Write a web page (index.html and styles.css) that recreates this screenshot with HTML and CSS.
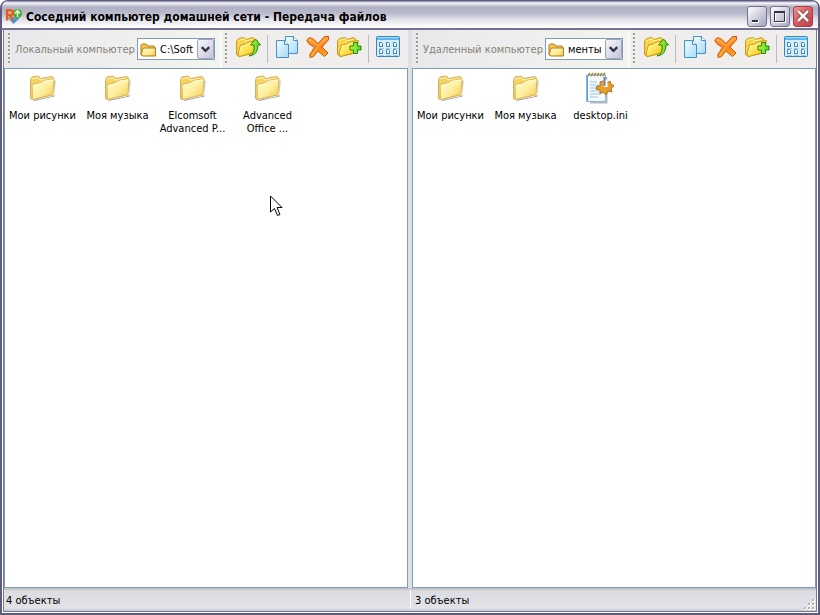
FILE: index.html
```html
<!DOCTYPE html>
<html lang="ru">
<head>
<meta charset="utf-8">
<title>Соседний компьютер домашней сети - Передача файлов</title>
<link rel="stylesheet" href="styles.css">
</head>
<body>
<svg class="defs" aria-hidden="true">
  <defs>
    <linearGradient id="gFolder" x1="0" y1="0" x2="1" y2="1"><stop offset="0" stop-color="#fffbcf"/><stop offset=".5" stop-color="#fff0a0"/><stop offset="1" stop-color="#f0c64c"/></linearGradient>
    <linearGradient id="gYellow" x1="0" y1="0" x2="1" y2="1"><stop offset="0" stop-color="#fff9a0"/><stop offset=".5" stop-color="#fde455"/><stop offset="1" stop-color="#f2b200"/></linearGradient>
    <linearGradient id="gPage" x1="0" y1="0" x2="1" y2="1"><stop offset="0" stop-color="#f4fcff"/><stop offset="1" stop-color="#a6daf6"/></linearGradient>
    <linearGradient id="gCross" x1="0" y1="0" x2="0" y2="1"><stop offset="0" stop-color="#ffa83c"/><stop offset=".5" stop-color="#ff801c"/><stop offset="1" stop-color="#f9ad20"/></linearGradient>
    <linearGradient id="gGreen" x1="0" y1="0" x2="1" y2="0"><stop offset="0" stop-color="#c9fa4a"/><stop offset="1" stop-color="#48d51c"/></linearGradient>
    <linearGradient id="gShield" x1="0" y1="0" x2="1" y2="1"><stop offset="0" stop-color="#8fc4f2"/><stop offset="1" stop-color="#2267b0"/></linearGradient>
  </defs>
  <symbol id="folder" viewBox="0 0 28 28">
    <path d="M4.500 26L22 22.500L25.500 21V6L26.500 7L25.500 22.500L5 27Z" fill="#777" opacity=".7"/>
    <path d="M1.500 8L2 4.500L3 3L9.500 2L11.500 4.500L23 2.500L24 3.500L23.500 21L2.500 25.500L1.500 24Z" fill="#f4d362" stroke="#d6b058" stroke-linejoin="round"/>
    <path d="M2.500 5L9 3.500L11 6L23 4" fill="none" stroke="#fff5b5"/>
    <path d="M3 10.500L12 8.500L14 6.500L25 4.500L24 20.500L3.500 25.500Z" fill="url(#gFolder)" stroke="#ddb95a" stroke-linejoin="round"/>
    <path d="M4.500 11.500L12.500 9.500L14.500 7.500L24 6" fill="none" stroke="#fffde2"/>
  </symbol>
  <symbol id="small-folder" viewBox="0 0 17 16">
    <path d="M1 3.500Q1 2 2.500 2H6L8 4H13.500Q15 4 15 5.500V13H1Z" fill="#f4c850" stroke="#b27c14"/>
    <path d="M4 6H15.500V14H2.500L1.500 12.500L2.500 7Z" fill="url(#gFolder)" stroke="#b27c14"/>
  </symbol>
  <symbol id="tool-folder" viewBox="0 0 26 24">
    <path d="M1.500 6L3.500 3.500L9 2.500L11 4.500L18 2.500L19.500 4V18L4 21.500L1.500 19.500Z" fill="#f6d348" stroke="#cd9915"/>
    <path d="M3 19L5.500 10L11 9L13 7L22.500 5.500L19.500 17.500L4.500 21.500Z" fill="url(#gYellow)" stroke="#cd9915"/>
    <path d="M3 6.500L4.500 5L9 4L10.500 6L17.500 4.500" fill="none" stroke="#fff8a8"/>
    <path d="M4.500 18L6.500 11L11.500 10L13.500 8" fill="none" stroke="#fff8a8"/>
  </symbol>
  <symbol id="copy" viewBox="0 0 24 24">
    <path d="M10.500 1.500H18.500L22.500 5.500V18.500H10.500Z" fill="url(#gPage)" stroke="#4390cb"/>
    <path d="M18.500 1.500V5.500H22.500" fill="#fff" stroke="#4390cb"/>
    <path d="M1.500 5.500H9.500L13.500 9.500V22.500H1.500Z" fill="url(#gPage)" stroke="#4390cb"/>
    <path d="M9.500 5.500V9.500H13.500" fill="#fff" stroke="#4390cb"/>
  </symbol>
  <symbol id="cross" viewBox="0 0 24 24">
    <path d="M.8 5L3.500 2.500L7.500 4L12 8.500L18.500 1.500L22.500 1.500V4.800L16 12L22 18L18.500 21.500L11.800 16L7.500 21.500L4 22.500L3.800 19.500L8.500 12.500L2.500 8.500Z" fill="url(#gCross)" stroke="#cf5510" stroke-linejoin="round"/>
    <path d="M3 5L6 6L12 11L20 3.500M12 12L6 20" fill="none" stroke="#ffc14c"/>
  </symbol>
  <symbol id="views" viewBox="0 0 24 22">
    <rect x=".5" y=".5" width="23" height="20" rx="1" fill="#d3eeff" stroke="#3983bf"/>
    <path d="M1 1H23V4H1Z" fill="#5bb8ee"/><path d="M1.500 1.500H22.500" stroke="#a9e1ff"/>
    <g fill="#fff" stroke="#3b81b2"><path id="page-cell" d="M3.500 6.500H5.500L6.500 7.500V10.500H3.500Z"/><use href="#page-cell" x="7"/><use href="#page-cell" x="14"/><use href="#page-cell" y="7"/><use href="#page-cell" x="7" y="7"/><use href="#page-cell" x="14" y="7"/></g>
    <path d="M3 12.500H8M10 12.500H15M17 12.500H22M3 19.500H8M10 19.500H15M17 19.500H22" stroke="#a2cfe8"/>
  </symbol>
  <symbol id="ini" viewBox="0 0 32 32">
    <path d="M5 30.500H21.500V5" fill="none" stroke="#88a" stroke-width="2" opacity=".6"/>
    <path d="M1.500 3H20.500V29.500H1.500Z" fill="#f5fbff" stroke="#8db4dc"/>
    <path d="M2 4H3V29H2Z" fill="#5a9be4"/>
    <path d="M5 10H12M5 13H13M5 16H11M5 19H14M5 22H15M5 25H13" stroke="#9ac1e5"/>
    <path d="M3 4L5 1M6 4L8 1M9 4L11 1M12 4L14 1M15 4L17 1M18 4L20 1" stroke="#9b7d35" stroke-width="1.500"/>
    <path d="M18 9L21 8L22 11L25 9L26 12L29 14L26 16L27 20L23 19L21 23L18 20L15 22L15 18L11 17L12 14L15 14L15 10Z" fill="#e5a02c" stroke="#b66a17"/>
    <path d="M20.500 7.500V15" stroke="#fff" stroke-width="4"/><path d="M19.500 5V14" stroke="#718096" stroke-width="2"/>
  </symbol>
</svg>

<main class="window">
  <header class="titlebar">
    <svg class="app-icon" viewBox="0 0 17 17" aria-hidden="true">
      <path d="M3 10L8.500 15.500L14 10.500L12 9H5Z" fill="url(#gShield)" stroke="#6aa5da"/>
      <circle cx="12.500" cy="5.500" r="4.500" fill="#3daf2b"/><path d="M12.500 9V3M10 5.500L12.500 2.500L15 5.500" fill="none" stroke="#eaffda" stroke-width="1.500"/>
      <path d="M2 12.500V2.200H5Q7.800 2.200 7.800 4.700T5 7.200H2M5 7.200L8 12" fill="none" stroke="#f25a12" stroke-width="2.300"/>
    </svg>
    <h1>Соседний компьютер домашней сети - Передача файлов</h1>
    <div class="window-buttons">
      <button aria-label="Свернуть"><svg viewBox="0 0 18 18"><path d="M4 13H11V16H4Z" fill="#fff"/><path d="M4 13H10V15H4Z" fill="#343449"/></svg></button>
      <button aria-label="Развернуть"><svg viewBox="0 0 18 18"><path d="M4.500 5.500H14.500V15.500H4.500Z" fill="none" stroke="#fff" /><path d="M3.500 4.500H13.500V14.500H3.500Z" fill="none" stroke="#343449"/><path d="M3 4H14V6H3Z" fill="#343449"/></svg></button>
      <button class="close" aria-label="Закрыть"><svg viewBox="0 0 18 18"><path d="M4 4L14 14M14 4L4 14" stroke="#733" stroke-width="4"/><path d="M4 4L14 14M14 4L4 14" stroke="#fff" stroke-width="2.500"/></svg></button>
    </div>
  </header>

  <div class="panes">
    <section class="pane">
      <div class="toolbar">
        <div class="location">
          <i class="grip"></i><label for="local">Локальный компьютер</label>
          <div class="combo"><svg class="combo-icon"><use href="#small-folder"/></svg><select id="local"><option>C:\Soft</option></select><svg class="arrow" viewBox="0 0 16 18"><path d="M4 7L8 11L12 7" fill="none" stroke="#343449" stroke-width="2.500"/></svg></div>
        </div>
        <div class="tools">
          <i class="grip"></i>
          <button aria-label="Вверх"><svg width="26" height="24"><use href="#tool-folder"/><path d="M14 21Q20 19 19 10H15.500L20.500 4L25.500 10H23Q23 20 14 21Z" fill="url(#gGreen)" stroke="#34860d"/></svg></button>
          <i class="separator"></i>
          <button aria-label="Копировать"><svg width="24" height="24"><use href="#copy"/></svg></button>
          <button aria-label="Удалить"><svg width="24" height="24"><use href="#cross"/></svg></button>
          <button aria-label="Создать папку"><svg width="26" height="24"><use href="#tool-folder"/><path d="M17.500 7.500H21.500V11H25V15H21.500V18.500H17.500V15H14V11H17.500Z" fill="url(#gGreen)" stroke="#238711"/></svg></button>
          <i class="separator"></i>
          <button aria-label="Вид"><svg width="24" height="22"><use href="#views"/></svg></button>
        </div>
      </div>
      <ul class="files">
        <li><svg><use href="#folder"/></svg><span>Мои рисунки</span></li>
        <li><svg><use href="#folder"/></svg><span>Моя музыка</span></li>
        <li><svg><use href="#folder"/></svg><span>Elcomsoft<br>Advanced P...</span></li>
        <li><svg><use href="#folder"/></svg><span>Advanced<br>Office ...</span></li>
      </ul>
    </section>
    <section class="pane">
      <div class="toolbar">
        <div class="location">
          <i class="grip"></i><label for="remote">Удаленный компьютер</label>
          <div class="combo"><svg class="combo-icon"><use href="#small-folder"/></svg><select id="remote"><option>менты</option></select><svg class="arrow" viewBox="0 0 16 18"><path d="M4 7L8 11L12 7" fill="none" stroke="#343449" stroke-width="2.500"/></svg></div>
        </div>
        <div class="tools">
          <i class="grip"></i>
          <button aria-label="Вверх"><svg width="26" height="24"><use href="#tool-folder"/><path d="M14 21Q20 19 19 10H15.500L20.500 4L25.500 10H23Q23 20 14 21Z" fill="url(#gGreen)" stroke="#34860d"/></svg></button>
          <i class="separator"></i>
          <button aria-label="Копировать"><svg width="24" height="24"><use href="#copy"/></svg></button>
          <button aria-label="Удалить"><svg width="24" height="24"><use href="#cross"/></svg></button>
          <button aria-label="Создать папку"><svg width="26" height="24"><use href="#tool-folder"/><path d="M17.500 7.500H21.500V11H25V15H21.500V18.500H17.500V15H14V11H17.500Z" fill="url(#gGreen)" stroke="#238711"/></svg></button>
          <i class="separator"></i>
          <button aria-label="Вид"><svg width="24" height="22"><use href="#views"/></svg></button>
        </div>
      </div>
      <ul class="files">
        <li><svg><use href="#folder"/></svg><span>Мои рисунки</span></li>
        <li><svg><use href="#folder"/></svg><span>Моя музыка</span></li>
        <li><svg class="document"><use href="#ini"/></svg><span>desktop.ini</span></li>
      </ul>
    </section>
  </div>

  <footer class="statusbar">
    <span>4 объекты</span><span>3 объекты</span>
    <svg class="resize" viewBox="0 0 12 12" aria-hidden="true"><path d="M9 1h3v3h-3zM5 5h3v3h-3zM9 5h3v3h-3zM1 9h3v3h-3zM5 9h3v3h-3zM9 9h3v3h-3z" fill="#fff"/><path d="M9 1h2v2h-2zM5 5h2v2h-2zM9 5h2v2h-2zM1 9h2v2h-2zM5 9h2v2h-2zM9 9h2v2h-2z" fill="#b8b5a5"/></svg>
  </footer>
  <svg class="cursor" viewBox="0 0 13 22" aria-hidden="true"><path d="M.5 1V17L4.500 13.500L7.500 20.500L10 19.500L7 12.500H12Z" fill="#fff" stroke="#000"/></svg>
</main>
</body>
</html>
```
FILE: styles.css
```css
* { box-sizing: border-box; }

body {
  margin: 0;
  background: #fff;
  color: #000;
  font: 11px/13px "DejaVu Sans Condensed", Tahoma, sans-serif;
}

.defs {
  position: absolute;
  width: 0;
  height: 0;
}

.window {
  position: relative;
  display: flex;
  flex-direction: column;
  min-height: 100vh;
  padding: 0 2px 2px;
  border: 2px solid #5f5d7d;
  border-top-width: 1px;
  border-radius: 8px 8px 0 0;
  background: #dfdfe6;
  box-shadow: inset 0 0 0 1px #fff, inset 0 0 0 2px #77779a;
}

.titlebar {
  display: flex;
  align-items: center;
  height: 29px;
  margin: 0 -2px;
  padding: 3px 5px 0 3px;
  border-bottom: 2px solid #74738e;
  border-radius: 6px 6px 0 0;
  background: linear-gradient(#77779a 0, #fff 2px, #e2e2eb 3px, #b0b0c5 6px, #b9b9cb 12px, #dedee7 18px, #fff 26px);
}

.app-icon {
  width: 17px;
  height: 17px;
  margin-right: 4px;
}

h1 {
  flex: 1;
  margin: 0;
  padding-top: 2px;
  font: 700 12px/18px "DejaVu Sans Condensed", "Open Sans", sans-serif;
}

.window-buttons {
  display: flex;
  gap: 3px;
}

button {
  display: flex;
  align-items: center;
  justify-content: center;
  padding: 0;
  border: 0;
  background: none;
}

.window-buttons button {
  width: 20px;
  height: 21px;
  border: 1px solid #737391;
  border-radius: 3px;
  background: linear-gradient(135deg, #fff, #d5d5e2 45%, #a4a4bd);
}

.window-buttons .close {
  border-color: #a33d4b;
  background: linear-gradient(135deg, #e99a9c, #d95e62 45%, #bd4149);
}

.window-buttons svg {
  width: 18px;
  height: 18px;
}

.panes {
  display: grid;
  flex: 1;
  grid-template-columns: 1fr 1fr;
  gap: 4px;
}

.pane {
  display: flex;
  flex-direction: column;
  min-width: 0;
}

.toolbar {
  display: flex;
  height: 38px;
  background: #efeeed;
}

.location,
.tools {
  display: flex;
  align-items: center;
}

.location {
  width: 218px;
  padding: 0 6px 0 4px;
  border-right: 1px solid #fff;
  background: linear-gradient(90deg, #e9e9ec, #f3f3ef);
}

.grip {
  width: 3px;
  height: 32px;
  margin-right: 4px;
  background: radial-gradient(circle at 1px 1px, #9c9b96 1px, #fff 1px, transparent 2px) 0 0 / 3px 4px;
}

label {
  color: #858279;
  white-space: nowrap;
}

.combo {
  position: relative;
  width: 78px;
  height: 22px;
  margin-left: auto;
}

select {
  width: 100%;
  height: 22px;
  padding: 0 18px 0 22px;
  border: 1px solid #7f9db9;
  border-radius: 0;
  background: #fff;
  color: #000;
  font: inherit;
  appearance: none;
}

.combo-icon {
  position: absolute;
  top: 4px;
  left: 3px;
  width: 17px;
  height: 16px;
  pointer-events: none;
}

.arrow {
  position: absolute;
  top: 1px;
  right: 1px;
  width: 17px;
  height: 20px;
  border: 1px solid #a2a2b8;
  border-radius: 2px;
  background: linear-gradient(135deg, #f6f6fc, #c5c5d8);
  pointer-events: none;
}

.tools {
  padding-left: 3px;
}

.tools button {
  width: 31px;
  height: 32px;
  padding-bottom: 4px;
}

.separator {
  width: 8px;
  height: 28px;
  border-left: 4px solid #efeeed;
  border-right: 3px solid #efeeed;
  background: #bcbcbf;
}

.files {
  display: flex;
  flex: 1;
  flex-wrap: wrap;
  align-content: flex-start;
  margin: 0;
  padding: 3px 0;
  border: 1px solid #7f9db9;
  background: #fff;
  list-style: none;
}

.files li {
  display: flex;
  flex-direction: column;
  align-items: center;
  width: 75px;
  text-align: center;
  white-space: nowrap;
}

.files svg {
  width: 28px;
  height: 28px;
  margin: 2px 0 7px;
}

.files .document {
  width: 32px;
  height: 32px;
  margin: 0 0 5px;
}

.statusbar {
  position: relative;
  display: grid;
  grid-template-columns: 1fr 1fr;
  align-items: center;
  height: 23px;
  background: linear-gradient(#b9b9bf, #dcdce3 3px, #e2e2e8 20px, #c7c7d2);
}

.statusbar span {
  padding: 4px 2px 2px;
}

.statusbar span + span {
  padding-left: 4px;
  border-left: 1px solid #fff;
}

.resize {
  position: absolute;
  right: 1px;
  bottom: 1px;
  width: 12px;
  height: 12px;
}

.cursor {
  position: absolute;
  top: 194px;
  left: 268px;
  width: 13px;
  height: 22px;
}
```
